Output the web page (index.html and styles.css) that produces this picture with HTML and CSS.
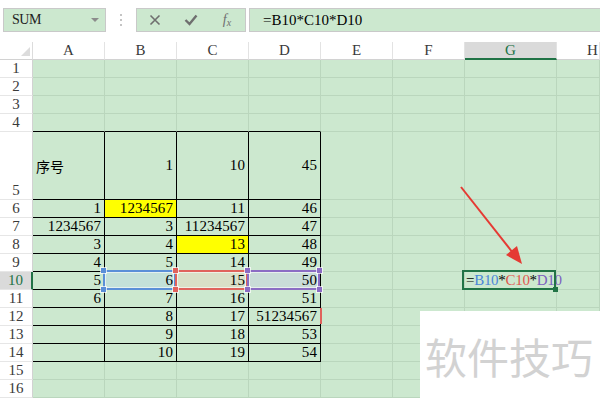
FILE: index.html
```html
<!DOCTYPE html>
<html>
<head>
<meta charset="utf-8">
<link rel="stylesheet" href="styles.css">
</head>
<body>
<div class="app">
  <div class="toolbar">
    <div class="namebox"><span>SUM</span><span class="caret"></span></div>
    <div class="dots"><i></i><i></i><i></i></div>
    <div class="btns">
      <span class="btn"><svg width="12" height="12" viewBox="0 0 12 12"><path d="M1.5 1.5 L10.5 10.5 M10.5 1.5 L1.5 10.5" stroke="#6f6f6f" stroke-width="1.6" fill="none"/></svg></span>
      <span class="btn"><svg width="14" height="12" viewBox="0 0 14 12"><path d="M1.5 6 L5.5 10 L12.5 1.5" stroke="#6f6f6f" stroke-width="2.4" fill="none"/></svg></span>
      <span class="btn fx">f<span class="fxs">x</span></span>
    </div>
    <div class="formula">=B10*C10*D10</div>
  </div>
  <div class="sheet">
    <div class="corner"></div><div class="ch">A</div><div class="ch">B</div><div class="ch">C</div><div class="ch">D</div><div class="ch">E</div><div class="ch">F</div><div class="ch sel">G</div><div class="ch hcol">H</div>

    <div class="rh">1</div><div class="c"></div><div class="c"></div><div class="c"></div><div class="c"></div><div class="c"></div><div class="c"></div><div class="c"></div><div class="c"></div>
    <div class="rh">2</div><div class="c"></div><div class="c"></div><div class="c"></div><div class="c"></div><div class="c"></div><div class="c"></div><div class="c"></div><div class="c"></div>
    <div class="rh">3</div><div class="c"></div><div class="c"></div><div class="c"></div><div class="c"></div><div class="c"></div><div class="c"></div><div class="c"></div><div class="c"></div>
    <div class="rh">4</div><div class="c tb"></div><div class="c tb"></div><div class="c tb"></div><div class="c tb"></div><div class="c"></div><div class="c"></div><div class="c"></div><div class="c"></div>

    <div class="rh">5</div><div class="c t zh">序号</div><div class="c t n">1</div><div class="c t n">10</div><div class="c t n">45</div><div class="c"></div><div class="c"></div><div class="c"></div><div class="c"></div>
    <div class="rh">6</div><div class="c t n">1</div><div class="c t n y">1234567</div><div class="c t n">11</div><div class="c t n">46</div><div class="c"></div><div class="c"></div><div class="c"></div><div class="c"></div>
    <div class="rh">7</div><div class="c t n">1234567</div><div class="c t n">3</div><div class="c t n">11234567</div><div class="c t n">47</div><div class="c"></div><div class="c"></div><div class="c"></div><div class="c"></div>
    <div class="rh">8</div><div class="c t n">3</div><div class="c t n">4</div><div class="c t n y">13</div><div class="c t n">48</div><div class="c"></div><div class="c"></div><div class="c"></div><div class="c"></div>
    <div class="rh">9</div><div class="c t n">4</div><div class="c t n">5</div><div class="c t n">14</div><div class="c t n">49</div><div class="c"></div><div class="c"></div><div class="c"></div><div class="c"></div>
    <div class="rh sel">10</div><div class="c t n">5</div><div class="c t n ref rb">6<i class="h tl"></i><i class="h bl"></i></div><div class="c t n ref rc">15<i class="h tl"></i><i class="h bl"></i></div><div class="c t n ref rd">50<i class="h tl"></i><i class="h bl"></i><i class="h tr"></i><i class="h br"></i></div><div class="c"></div><div class="c"></div><div class="c active">=<span class="kb">B10</span>*<span class="kc">C10</span>*<span class="kd">D10</span><span class="cursor"></span><i class="fh"></i></div><div class="c"></div>
    <div class="rh">11</div><div class="c t n">6</div><div class="c t n">7</div><div class="c t n">16</div><div class="c t n">51</div><div class="c"></div><div class="c"></div><div class="c"></div><div class="c"></div>
    <div class="rh">12</div><div class="c t n"></div><div class="c t n">8</div><div class="c t n">17</div><div class="c t n mark">51234567</div><div class="c"></div><div class="c"></div><div class="c"></div><div class="c"></div>
    <div class="rh">13</div><div class="c t n"></div><div class="c t n">9</div><div class="c t n">18</div><div class="c t n">53</div><div class="c"></div><div class="c"></div><div class="c"></div><div class="c"></div>
    <div class="rh">14</div><div class="c t n"></div><div class="c t n">10</div><div class="c t n">19</div><div class="c t n">54</div><div class="c"></div><div class="c"></div><div class="c"></div><div class="c"></div>
    <div class="rh">15</div><div class="c"></div><div class="c"></div><div class="c"></div><div class="c"></div><div class="c"></div><div class="c"></div><div class="c"></div><div class="c"></div>
    <div class="rh">16</div><div class="c"></div><div class="c"></div><div class="c"></div><div class="c"></div><div class="c"></div><div class="c"></div><div class="c"></div><div class="c"></div>
  </div>
  <svg class="arrow" width="600" height="400" viewBox="0 0 600 400">
    <line x1="461" y1="187" x2="513" y2="253" stroke="#e53a33" stroke-width="2"/>
    <polygon points="522,264 506,255 517,246" fill="#e53a33"/>
  </svg>
  <div class="wm">软件技巧</div>
</div>
</body>
</html>
```

FILE: styles.css
```css
* { box-sizing: border-box; margin: 0; padding: 0; }
html, body { width: 600px; height: 400px; overflow: hidden; background: #fff; }
body { font-family: "Liberation Serif", serif; font-size: 15px; color: #000; }

.app { position: relative; width: 600px; height: 400px; }

.toolbar { height: 42px; display: flex; align-items: flex-start; padding: 8px 0 0 3px; }
.namebox { width: 103px; height: 24px; background: #cce8cf; border: 1px solid #c9c9c9; display: flex; align-items: center; justify-content: space-between; padding: 0 6px 0 8px; color: #222; font-size: 14px; letter-spacing: -0.5px; }
.caret { width: 0; height: 0; border-left: 4px solid transparent; border-right: 4px solid transparent; border-top: 4px solid #8c8c8c; }
.dots { width: 30px; height: 24px; display: flex; flex-direction: column; align-items: center; justify-content: center; gap: 3px; }
.dots i { width: 2px; height: 2px; background: #c4c4c4; }
.btns { width: 110px; height: 24px; background: #cce8cf; border: 1px solid #c9c9c9; display: grid; grid-template-columns: repeat(3, 1fr); align-items: center; }
.btn { display: flex; justify-content: center; align-items: center; }
.fx { font-style: italic; font-size: 14px; color: #6f6f6f; }
.fxs { font-size: 10px; margin-top: 4px; }
.formula { flex: 1; margin-left: 3px; height: 24px; background: #cce8cf; border: 1px solid #c9c9c9; border-right: none; padding-left: 13px; display: flex; align-items: center; }

.sheet { display: grid; grid-template-columns: 33px repeat(6, 72px) 92px 1fr; grid-template-rows: repeat(5, 18px) 68px repeat(11, 18px); }

.corner { position: relative; background: #fff; border-right: 1px solid #dcdcdc; border-bottom: 1px solid #d2d2d2; }
.corner::after { content: ""; position: absolute; right: 2px; bottom: 3px; width: 0; height: 0; border-left: 9px solid transparent; border-bottom: 9px solid #dcdcdc; }
.ch { background: #fff; border-right: 1px solid #e3e3e3; border-bottom: 1px solid #d2d2d2; display: flex; align-items: center; justify-content: center; color: #3a3a3a; }
.ch.sel { background: #dadada; border-bottom: 2px solid #217346; color: #217346; }
.ch.hcol { justify-content: flex-start; padding-left: 30px; }

.rh { background: #fff; border-right: 1px solid #d2d2d2; border-bottom: 1px solid #e6e6e6; display: flex; align-items: flex-end; justify-content: center; color: #3a3a3a; line-height: 17px; }
.rh.sel { background: #dadada; border-right: 2px solid #217346; color: #217346; }

.c { background: #cce8cf; border-right: 1px solid #bad6bd; border-bottom: 1px solid #bad6bd; display: flex; align-items: center; white-space: nowrap; letter-spacing: 0.1px; }
.c.t { border-right-color: #000; border-bottom-color: #000; }
.c.tb { border-bottom-color: #000; }
.n { justify-content: flex-end; padding-right: 3px; }
.zh { font-family: "Noto Sans CJK SC", sans-serif; font-size: 14px; letter-spacing: 0; padding-left: 3px; }
.y { background: #ffff00; }

.ref { position: relative; }
.ref::after { content: ""; position: absolute; left: -2px; top: -2px; right: 0; bottom: -1px; border: 2px solid var(--rc); box-shadow: inset 0 0 0 1px rgba(255, 255, 255, 0.55); }
.rb { --rc: #5a8fd8; background: #c3e1d9; }
.rc { --rc: #e0625c; background: #d9dfc7; }
.rd { --rc: #8b6cc4; background: #c9dcd8; }
.h { position: absolute; width: 5px; height: 5px; background: var(--rc); z-index: 2; box-shadow: 0 0 0 1px rgba(255, 255, 255, 0.7); }
.h.tl { left: -4px; top: -4px; }
.h.bl { left: -4px; bottom: -3px; }
.h.tr { right: -2px; top: -4px; }
.h.br { right: -2px; bottom: -3px; }

.active { position: relative; padding-left: 1px; overflow: visible; letter-spacing: -0.3px; }
.active::after { content: ""; position: absolute; left: -3px; top: -2px; right: 0; bottom: -1px; border: 2px solid #217346; }
.kb { color: #4a86d8; }
.kc { color: #e0574e; }
.kd { color: #7b5fbf; }
.cursor { display: inline-block; width: 1px; height: 14px; background: #000; margin-left: 1px; }
.fh { position: absolute; right: -2px; bottom: -3px; width: 5px; height: 5px; background: #217346; z-index: 2; }

.mark { position: relative; }
.mark::after { content: ""; position: absolute; right: -2px; top: 0; bottom: 1px; width: 2px; background: #e0625c; }

.arrow { position: absolute; left: 0; top: 0; pointer-events: none; }

.wm { position: absolute; left: 420px; top: 311px; right: 0; bottom: 0; background: #fff; display: flex; align-items: center; padding-left: 5px; font-family: "Noto Sans CJK SC", sans-serif; font-size: 42px; color: #d2d2d2; }
```
